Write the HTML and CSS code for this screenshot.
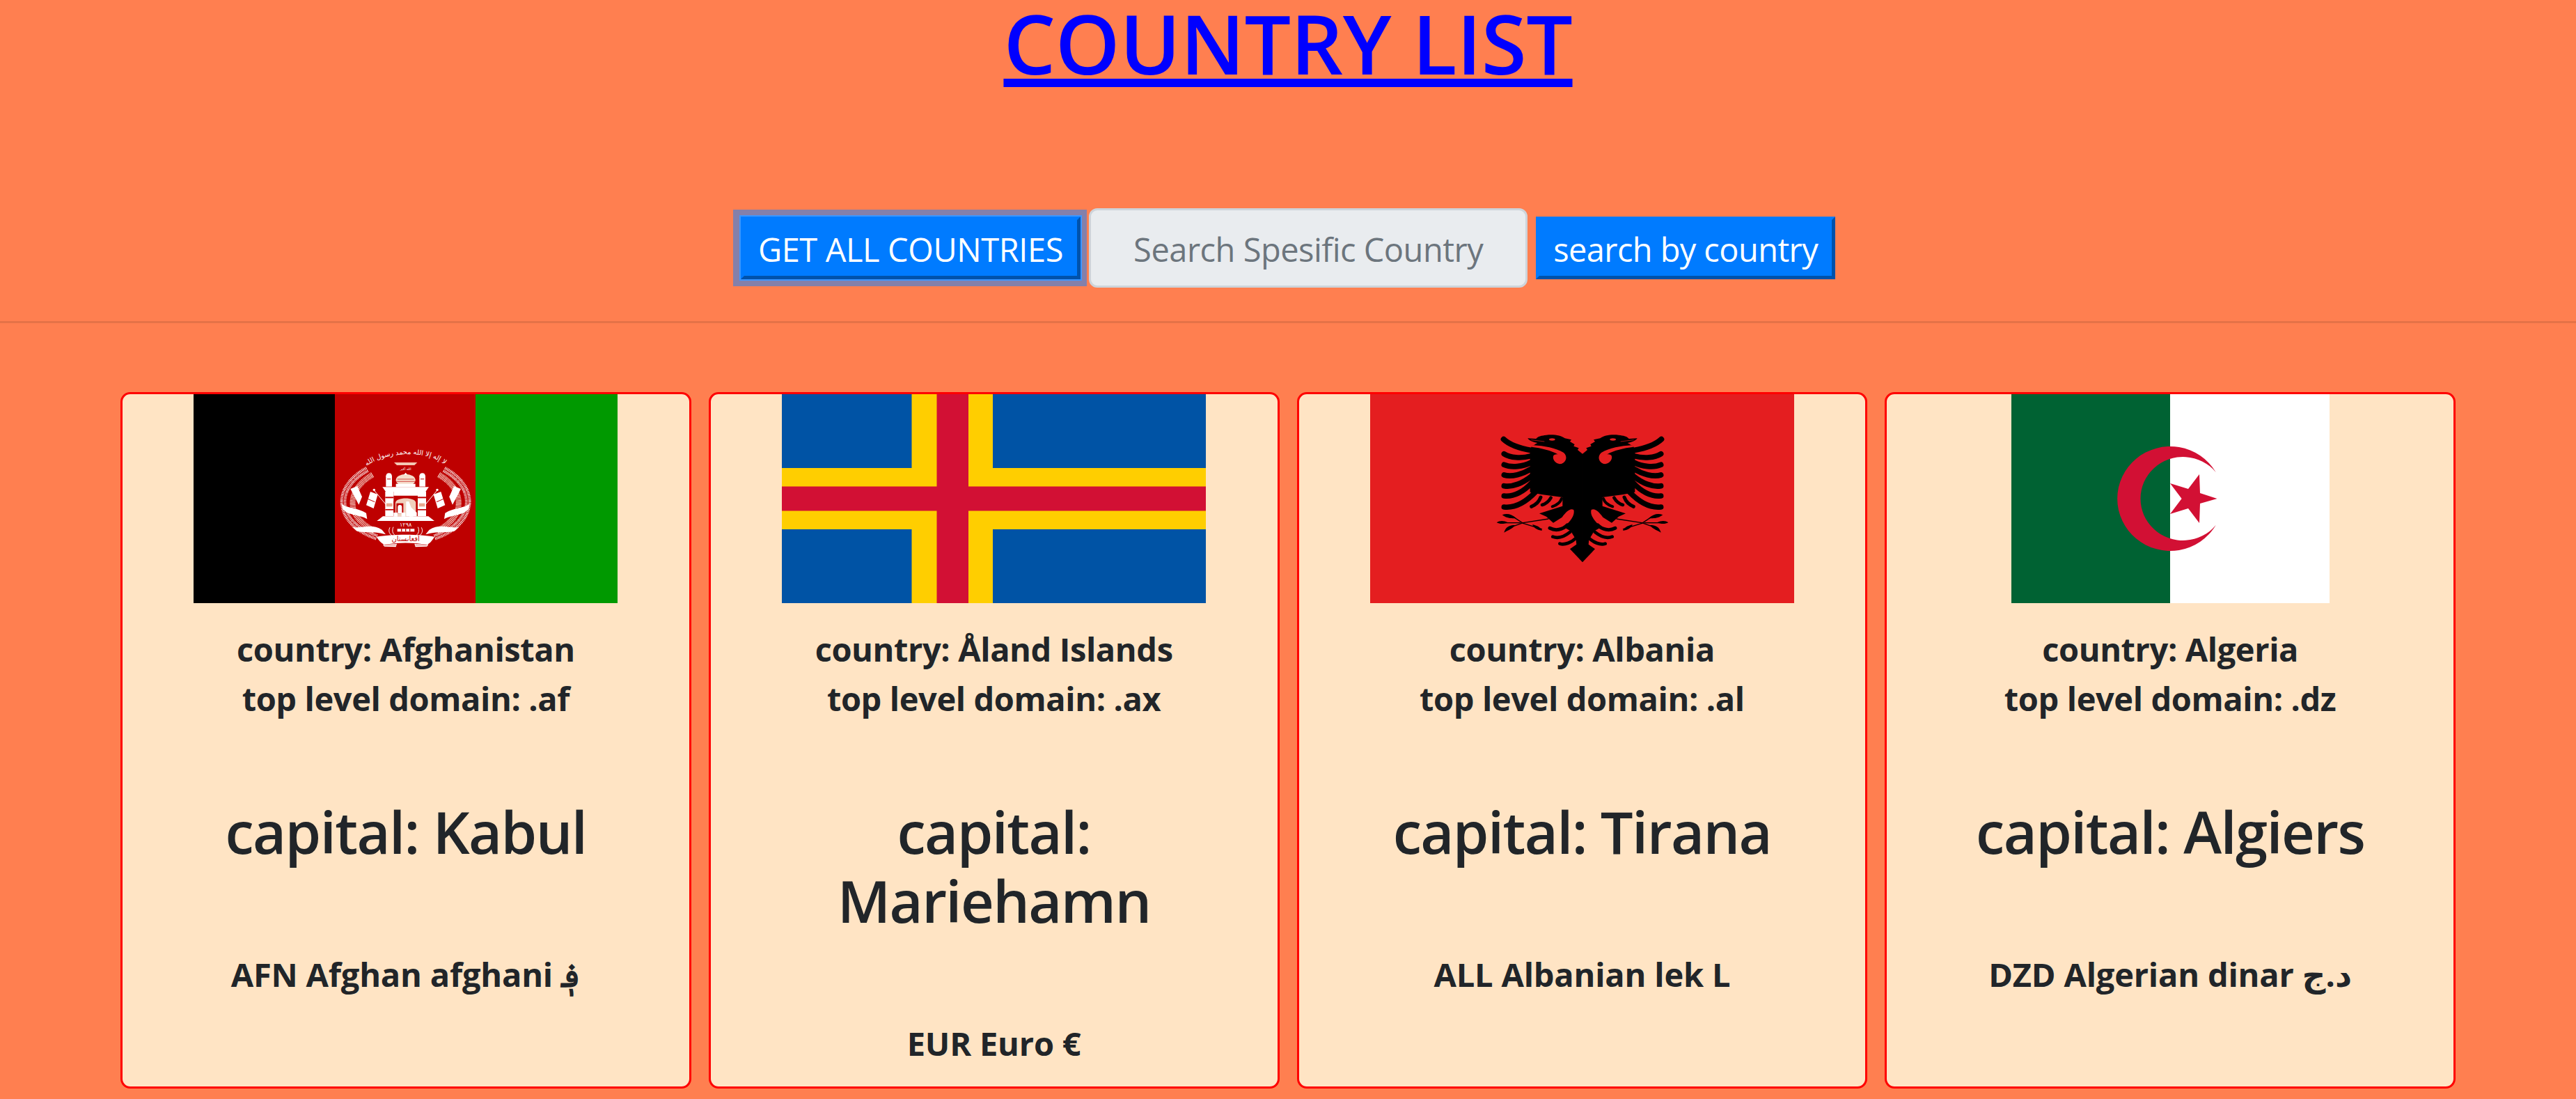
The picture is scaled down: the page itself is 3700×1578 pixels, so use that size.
FILE: index.html
```html
<!DOCTYPE html>
<html lang="en">
<head>
<meta charset="utf-8">
<title>Country List</title>
<link rel="stylesheet" href="styles.css">
</head>
<body>
<header class="page-head">
  <h1 class="title"><a href="#" class="title-link">COUNTRY LIST</a></h1>
  <form class="toolbar">
    <button type="button" class="btn btn-focus">GET ALL COUNTRIES</button>
    <input class="search" type="text" placeholder="Search Spesific Country">
    <button type="button" class="btn btn-search">search by country</button>
  </form>
</header>
<hr class="rule">
<main class="grid">
  <article class="card">
    <svg class="flag" width="609" height="300" viewBox="0 0 609 300">
      <rect width="204" height="300" fill="#000"/>
      <rect x="203" width="203" height="300" fill="#be0000"/>
      <rect x="405" width="204" height="300" fill="#090"/>
      <defs>
        <g id="af-half">
          <path d="M172 132C100 170 58 232 72 295C85 350 130 395 215 425" fill="none" stroke="#fff" stroke-width="26" stroke-dasharray="3 3"/>
          <path d="M172 132C100 170 58 232 72 295C85 350 130 395 215 425" fill="none" stroke="#be0000" stroke-width="3"/>
          <path d="M195 155C135 190 100 240 112 300C122 340 155 372 205 398" fill="none" stroke="#fbe4d8" stroke-width="24" stroke-dasharray="3 3"/>
          <path d="M62 280C90 302 130 296 168 320L172 346C140 326 92 332 66 302Z" fill="#fff"/>
          <path d="M108 380C150 388 190 362 236 392L252 412C200 396 150 408 126 397Z" fill="#fff"/>
          <path d="M100 216L130 204L150 250L136 284Z" fill="#fff"/>
          <path d="M186 228L218 240L200 300L168 286Z" fill="#fff"/>
          <path d="M172 258L205 272" stroke="#be0000" stroke-width="3"/>
          <path d="M202 222L252 282" stroke="#fff" stroke-width="3"/>
          <circle cx="202" cy="220" r="5" fill="#fff"/>
          <rect x="253" y="158" width="26" height="48" fill="#fff"/>
          <circle cx="266" cy="160" r="12" fill="#fff"/>
          <rect x="258" y="172" width="16" height="3" fill="#be0000"/>
          <rect x="250" y="228" width="36" height="105" fill="#fff"/>
          <rect x="250" y="250" width="36" height="6" fill="#be0000"/>
          <rect x="255" y="278" width="26" height="14" fill="#e8a88f"/>
          <rect x="250" y="303" width="36" height="5" fill="#be0000"/>
          <path d="M270 382C262 398 268 410 280 418M285 380C278 396 282 408 292 416" fill="none" stroke="#fff" stroke-width="3"/>
          <path d="M240 455L300 452L296 466L246 464Z" fill="#fff"/>
          <path d="M246 458L296 458" stroke="#be0000" stroke-width="2"/>
        </g>
      </defs>
      <g transform="translate(192 64) scale(.3333)">
        <use href="#af-half"/>
        <use href="#af-half" transform="translate(676 0) scale(-1 1)"/>
        <path id="af-arc" d="M160 128C225 55 445 40 515 122" fill="none"/>
        <text class="af-shahada"><textPath href="#af-arc" startOffset="50%">لا إله إلا الله محمد رسول الله</textPath></text>
        <path d="M288 102L388 102L376 114L300 114Z" fill="#f3c8b4"/>
        <text x="338" y="136" class="af-small">الله أكبر</text>
        <ellipse cx="338" cy="178" rx="42" ry="26" fill="#f6dccb"/>
        <path d="M330 155L338 146L346 155Z" fill="#fff"/>
        <path d="M298 184H378M302 174H374" stroke="#be0000" stroke-width="2"/>
        <path d="M296 194H380V208H296Z" fill="#fff"/>
        <path d="M238 208H438L424 228H252Z" fill="#fff"/>
        <path d="M286 228H390V245H286Z" fill="#fff"/>
        <path d="M286 334V272C286 240 390 240 390 272V334Z" fill="#be0000"/>
        <path d="M294 334V276C294 250 382 250 382 276V334Z" fill="#f0d0bd"/>
        <path d="M340 270V334H386L386 318L362 296L352 270Z" fill="#fff"/>
        <rect x="298" y="278" width="30" height="44" fill="#be0000"/>
        <path d="M304 322V294A8 8 0 0 1 322 294V322Z" fill="#fff"/>
        <rect x="390" y="228" width="36" height="105" fill="#fff"/>
        <rect x="390" y="250" width="36" height="6" fill="#be0000"/>
        <rect x="395" y="278" width="26" height="14" fill="#e8a88f"/>
        <rect x="390" y="303" width="36" height="5" fill="#be0000"/>
        <path d="M286 318h17v17h-17zM320 318h17v17h-17zM354 318h17v17h-17z" fill="#fff"/>
        <path d="M240 334H436L462 354H214Z" fill="#fff"/>
        <text x="338" y="378" class="af-year">۱۲۹۸</text>
        <path d="M302 388h74v12h-74z" fill="#fff"/>
        <path d="M320 388v12M338 388v12M356 388v12" stroke="#be0000" stroke-width="4"/>
        <path d="M212 422C280 410 396 410 462 422C452 440 440 452 430 456C370 446 305 446 246 456C234 450 222 438 212 422Z" fill="#fff"/>
        <text x="338" y="442" class="af-name">افغانستان</text>
      </g>
    </svg>
    <p class="info">country: Afghanistan<br>top level domain: .af</p>
    <h3 class="capital">capital: Kabul</h3>
    <p class="currency">AFN Afghan afghani ؋</p>
  </article>

  <article class="card">
    <svg class="flag" width="609" height="300" viewBox="0 0 609 300">
      <rect width="609" height="300" fill="#0053a5"/>
      <path d="M186.500 0H303V106H609V194H303V300H186.500V194H0V106H186.500Z" fill="#ffce00"/>
      <path d="M222.500 0H268V132.500H609V167.500H268V300H222.500V167.500H0V132.500H222.500Z" fill="#d21034"/>
    </svg>
    <p class="info">country: Åland Islands<br>top level domain: .ax</p>
    <h3 class="capital">capital: Mariehamn</h3>
    <p class="currency">EUR Euro €</p>
  </article>

  <article class="card">
    <svg class="flag" width="609" height="300" viewBox="0 0 609 300">
      <rect width="609" height="300" fill="#e41e20"/>
      <defs>
        <g id="al-half" fill="#000">
          <path d="M426 125L405 108L410 100L388 92L392 84L372 72L378 64L350 58C335 45 300 40 270 44C250 46 232 50 226 60L190 58C195 68 215 75 232 78L225 82L205 95L200 120V290L250 300L340 312L340 350L240 382L270 395L300 422L338 398C355 375 372 358 388 366C396 392 365 425 345 440L376 458L398 495L400 515L372 535L426 592Z"/>
          <g fill="none" stroke="#000" stroke-linecap="round">
            <path d="M86 62C110 85 150 100 205 110" stroke-width="24"/>
            <path d="M88 125C115 142 160 146 205 134" stroke-width="23"/>
            <path d="M88 172C120 186 170 180 205 162" stroke-width="23"/>
            <path d="M88 216C120 226 170 212 205 190" stroke-width="23"/>
            <path d="M88 263C125 270 170 250 205 222" stroke-width="23"/>
            <path d="M88 306C130 312 175 285 205 252" stroke-width="23"/>
            <path d="M88 354C140 360 190 325 225 288" stroke-width="23"/>
            <path d="M206 352C225 345 240 328 246 312" stroke-width="15"/>
            <path d="M252 345C270 340 282 328 290 314" stroke-width="14"/>
            <path d="M296 352C315 346 330 335 336 318" stroke-width="12"/>
            <path d="M285 445C310 458 340 452 360 432" stroke-width="15"/>
            <path d="M298 482C325 492 350 480 372 462" stroke-width="14"/>
            <path d="M328 512C350 520 380 505 398 488" stroke-width="14"/>
          </g>
          <path d="M215 88C260 90 310 100 345 120C362 135 358 160 335 168C312 172 296 150 300 135C302 127 315 125 322 128C290 110 250 100 205 95Z" fill="#e41e20"/>
          <g fill="none" stroke="#000" stroke-width="4">
            <path d="M280 405L170 422L120 440"/>
            <path d="M252 450L170 424L130 398"/>
            <path d="M160 422H72"/>
          </g>
          <path d="M56 421C70 412 85 412 105 421C85 428 70 428 56 421Z"/>
          <path d="M88 464C95 440 110 432 135 432C125 448 108 452 88 464Z"/>
          <path d="M80 388C100 380 120 384 140 402C115 404 98 402 80 388Z"/>
          <path d="M210 430C225 432 245 440 252 456C232 454 218 446 210 430Z"/>
        </g>
      </defs>
      <g transform="translate(163 44) scale(.3333)">
        <use href="#al-half"/>
        <use href="#al-half" transform="translate(852 0) scale(-1 1)"/>
        <ellipse cx="295" cy="63" rx="13" ry="5" fill="#e41e20"/>
        <ellipse cx="557" cy="63" rx="13" ry="5" fill="#e41e20"/>
        <path d="M205 65L262 72M647 65L590 72" stroke="#e41e20" stroke-width="2" fill="none"/>
      </g>
    </svg>
    <p class="info">country: Albania<br>top level domain: .al</p>
    <h3 class="capital">capital: Tirana</h3>
    <p class="currency">ALL Albanian lek L</p>
  </article>

  <article class="card">
    <svg class="flag" width="457" height="300" viewBox="0 0 457 300">
      <rect width="457" height="300" fill="#fff"/>
      <rect width="228" height="300" fill="#006233"/>
      <path d="M293.700 112A76 75 0 1 0 293.700 188A61 60 0 1 1 293.700 112Z" fill="#d21034"/>
      <path d="M270 115L271 142L295.500 150L271 157L270 185L254 164L228 172L244.600 150L228 128L254 136Z" fill="#d21034"/>
    </svg>
    <p class="info">country: Algeria<br>top level domain: .dz</p>
    <h3 class="capital">capital: Algiers</h3>
    <p class="currency">DZD Algerian dinar د.ج</p>
  </article>
</main>
</body>
</html>
```
FILE: styles.css
```css
html, body {
  margin: 0;
  padding: 0;
}
body {
  background: #ff7f50;
  color: #212529;
  font-family: "Open Sans", "DejaVu Sans", sans-serif;
}
.page-head {
  display: flex;
  flex-direction: column;
}
.title {
  margin: 0;
  text-align: center;
  font-size: 118px;
  font-weight: 560;
  line-height: 124px;
  letter-spacing: -.4px;
}
.title-link {
  color: #00f;
  text-decoration: underline;
  text-decoration-thickness: 12px;
  text-underline-offset: 6px;
}
.toolbar {
  display: flex;
  justify-content: center;
  align-items: center;
  gap: 12px;
  margin-top: 175px;
}
.btn {
  height: 90px;
  padding: 3px 20px 0;
  border: 5px outset #007bff;
  background: #007bff;
  color: #fff;
  font: 400 47px "Open Sans", sans-serif;
  letter-spacing: -.4px;
}
.btn-search {
  letter-spacing: -.6px;
}
.btn-focus {
  box-shadow: 0 0 0 2px #3d96ff, -1px 0 0 10px #8480aa;
}
.search {
  box-sizing: border-box;
  width: 630px;
  height: 114px;
  padding: 3px 20px 0;
  border: 3px solid #ced4da;
  border-radius: 12px;
  background: #e9ecef;
  color: #495057;
  font: 400 47px "Open Sans", sans-serif;
  letter-spacing: -.5px;
  text-align: center;
}
.search::placeholder {
  color: #6c757d;
  opacity: 1;
}
.rule {
  margin: 48px 0 0;
  height: 3px;
  border: 0;
  background: rgba(0, 0, 0, .1);
}
.grid {
  display: grid;
  grid-template-columns: repeat(4, 1fr);
  gap: 25px;
  padding: 99px 173px 17px;
}
.card {
  display: flex;
  flex-direction: column;
  align-items: center;
  border: 3px solid #f00;
  border-radius: 14px;
  background: #ffe4c4;
  text-align: center;
  padding-bottom: 26px;
}
.flag {
  display: block;
  flex: none;
}
.info {
  margin: 31px 0 0;
  font-size: 47px;
  font-weight: 700;
  line-height: 71px;
  letter-spacing: -.4px;
}
.capital {
  margin: 105px 0 121px;
  padding: 0 50px;
  font-size: 83px;
  font-weight: 560;
  line-height: 99px;
  letter-spacing: -1.6px;
}
.currency {
  margin: 0;
  font-size: 47px;
  font-weight: 700;
  line-height: 71px;
  letter-spacing: -.2px;
}
.af-shahada {
  font-family: "DejaVu Sans", sans-serif;
  font-size: 29px;
  fill: #fff;
  text-anchor: middle;
}
.af-small, .af-year, .af-name {
  font-family: "DejaVu Sans", sans-serif;
  text-anchor: middle;
}
.af-small {
  font-size: 14px;
  fill: #fff;
}
.af-year {
  font-size: 24px;
  fill: #fff;
}
.af-name {
  font-size: 30px;
  fill: #be0000;
}
```
